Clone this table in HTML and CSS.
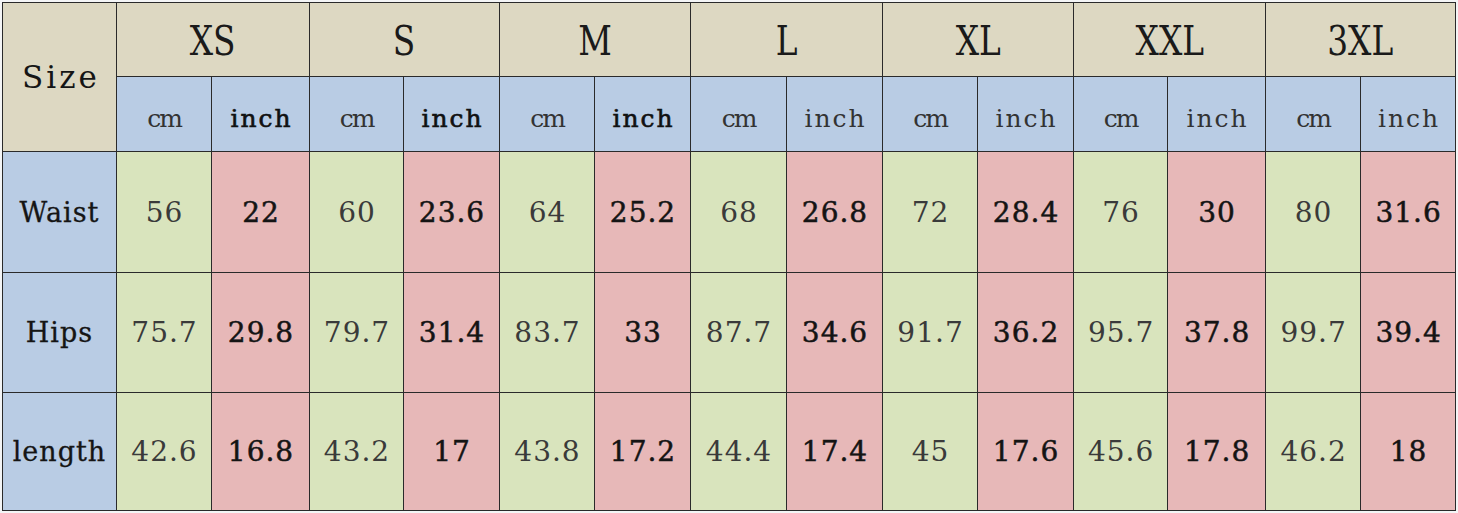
FILE: index.html
```html
<!DOCTYPE html>
<html lang="en">
<head>
<meta charset="utf-8">
<title>Size chart</title>
<link rel="stylesheet" href="styles.css">
</head>
<body>
<table class="chart">
  <colgroup>
    <col class="c-label">
    <col class="c95"><col class="c98">
    <col class="c94"><col class="c96">
    <col class="c95"><col class="c96">
    <col class="c96"><col class="c96">
    <col class="c95"><col class="c96">
    <col class="c94"><col class="c98">
    <col class="c95"><col class="c95">
  </colgroup>
  <thead>
    <tr class="row-size">
      <th class="size-label" rowspan="2">Size</th>
      <th class="size" colspan="2"><span>XS</span></th>
      <th class="size" colspan="2"><span>S</span></th>
      <th class="size" colspan="2"><span>M</span></th>
      <th class="size" colspan="2"><span>L</span></th>
      <th class="size" colspan="2"><span>XL</span></th>
      <th class="size" colspan="2"><span>XXL</span></th>
      <th class="size" colspan="2"><span>3XL</span></th>
    </tr>
    <tr class="row-unit">
      <th class="unit cm">cm</th><th class="unit inch strong">inch</th>
      <th class="unit cm">cm</th><th class="unit inch strong">inch</th>
      <th class="unit cm">cm</th><th class="unit inch strong">inch</th>
      <th class="unit cm">cm</th><th class="unit inch">inch</th>
      <th class="unit cm">cm</th><th class="unit inch">inch</th>
      <th class="unit cm">cm</th><th class="unit inch">inch</th>
      <th class="unit cm">cm</th><th class="unit inch">inch</th>
    </tr>
  </thead>
  <tbody>
    <tr class="row-waist">
      <th class="label">Waist</th>
      <td class="cm">56</td><td class="in">22</td>
      <td class="cm">60</td><td class="in">23.6</td>
      <td class="cm">64</td><td class="in">25.2</td>
      <td class="cm">68</td><td class="in">26.8</td>
      <td class="cm">72</td><td class="in">28.4</td>
      <td class="cm">76</td><td class="in">30</td>
      <td class="cm">80</td><td class="in">31.6</td>
    </tr>
    <tr class="row-hips">
      <th class="label">Hips</th>
      <td class="cm">75.7</td><td class="in">29.8</td>
      <td class="cm">79.7</td><td class="in">31.4</td>
      <td class="cm">83.7</td><td class="in">33</td>
      <td class="cm">87.7</td><td class="in">34.6</td>
      <td class="cm">91.7</td><td class="in">36.2</td>
      <td class="cm">95.7</td><td class="in">37.8</td>
      <td class="cm">99.7</td><td class="in">39.4</td>
    </tr>
    <tr class="row-length">
      <th class="label">length</th>
      <td class="cm">42.6</td><td class="in">16.8</td>
      <td class="cm">43.2</td><td class="in">17</td>
      <td class="cm">43.8</td><td class="in">17.2</td>
      <td class="cm">44.4</td><td class="in">17.4</td>
      <td class="cm">45</td><td class="in">17.6</td>
      <td class="cm">45.6</td><td class="in">17.8</td>
      <td class="cm">46.2</td><td class="in">18</td>
    </tr>
  </tbody>
</table>
</body>
</html>
```

FILE: styles.css
```css
html, body {
  margin: 0;
  padding: 0;
  background: #f4f5f6;
}

body {
  padding: 2px 0 0 2px;
  font-family: "DejaVu Serif", "Liberation Serif", serif;
  color: #222;
}

.chart {
  border-collapse: collapse;
  table-layout: fixed;
  width: 1454px;
}

.c-label { width: 114px; }
.c94 { width: 94px; }
.c95 { width: 95px; }
.c96 { width: 96px; }
.c98 { width: 98px; }

.chart th,
.chart td {
  border: 1px solid #2a2a2a;
  padding: 0;
  text-align: center;
  vertical-align: middle;
  font-weight: normal;
  white-space: nowrap;
  font-family: "DejaVu Serif", "Liberation Serif", serif;
}

.row-size { height: 74px; }
.row-unit { height: 75px; }
.row-waist { height: 121px; }
.row-hips { height: 120px; }
.row-length { height: 118px; }

/* header size names */
.chart .size {
  background: #ddd8c2;
  font-size: 41px;
  color: #1a1a1a;
}
.size span {
  display: inline-block;
  transform: scaleX(0.8);
  padding-top: 2px;
}

.chart .size-label {
  background: #ddd8c2;
  font-size: 31px;
  letter-spacing: 3px;
  color: #151515;
  padding-left: 3px;
}

/* units row */
.chart .unit {
  background: #b9cce4;
  font-size: 25px;
  color: #333;
  padding-top: 8px;
}
.chart .unit.cm {
  letter-spacing: -2px;
}
.chart .unit.inch {
  letter-spacing: 2px;
  padding-left: 2px;
}
.chart .unit.strong {
  color: #111;
  -webkit-text-stroke: 0.6px #111;
}

/* row labels */
.chart .label {
  background: #b9cce4;
  font-size: 27px;
  color: #151515;
  letter-spacing: 1px;
  -webkit-text-stroke: 0.3px #151515;
}

/* values */
.chart td {
  font-size: 28px;
  letter-spacing: 1px;
  padding-left: 1px;
}
.chart td.cm {
  background: #d9e4bd;
  color: #3a3a3a;
}
.chart td.in {
  background: #e7b8b8;
  color: #141414;
  -webkit-text-stroke: 0.5px #141414;
}
```
